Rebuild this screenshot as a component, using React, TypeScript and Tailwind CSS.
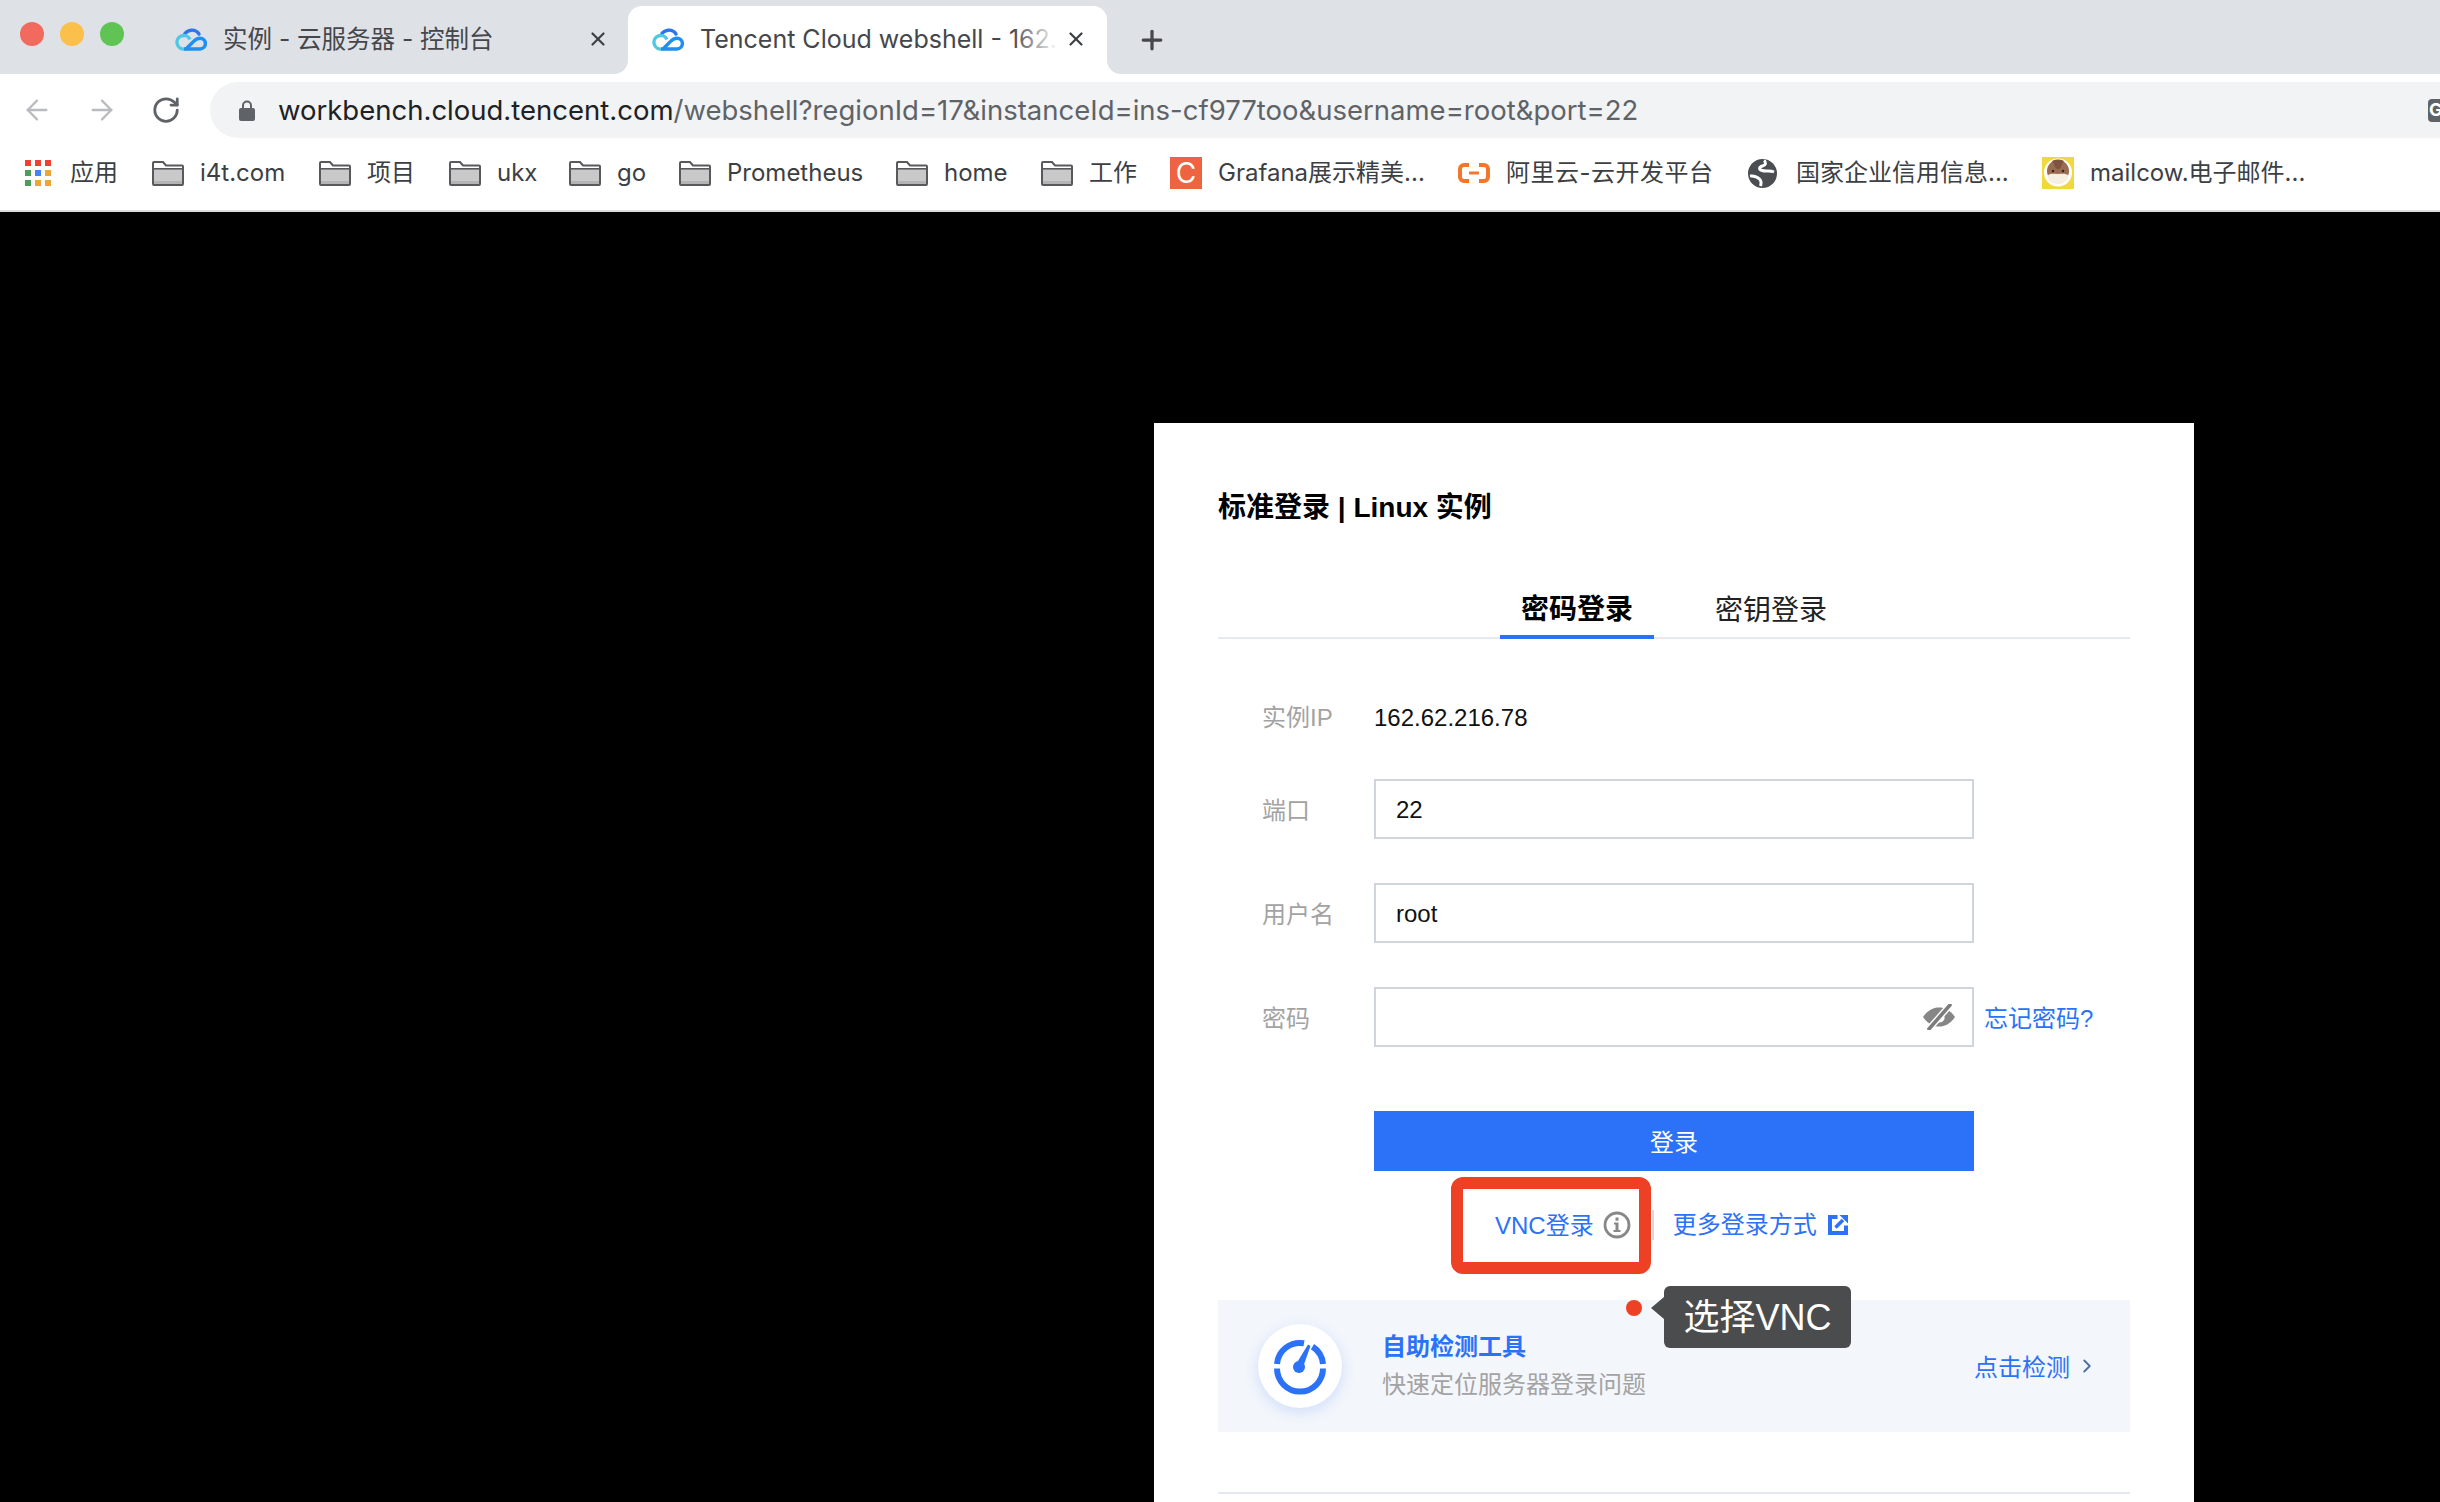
import React from 'react';
import { ArrowLeft, ArrowRight, RotateCw, ChevronRight, X, Plus } from 'lucide-react';

const chromeFont = "[font-family:'Inter','Noto_Sans_CJK_SC',sans-serif]";

function CloudLogo() {
  return (
    <svg width="32" height="24" viewBox="0 0 32 24" fill="none" strokeWidth="3.4" className="shrink-0">
      <path d="M9 8.5A8.5 8.5 0 0 1 24 7" stroke="#2b76f0" strokeLinecap="round" />
      <path d="M15 12.5A6.8 6.8 0 1 0 10 22" stroke="#4fc8e6" />
      <path d="M9 22H25A5.4 5.4 0 0 0 25 11.2C21 11.2 19 14 17 16L11.5 21.5" stroke="#1f8ff0" strokeLinejoin="round" />
    </svg>
  );
}

function Folder() {
  return (
    <svg width="32" height="25" viewBox="0 0 32 25" className="shrink-0">
      <path d="M2 1h9l3 3.5h16a1 1 0 0 1 1 1V23a1 1 0 0 1-1 1H2a1 1 0 0 1-1-1V2a1 1 0 0 1 1-1z" fill="#fff" stroke="#58595c" strokeWidth="2" />
      <rect x="2" y="8" width="28" height="15" fill="#c9c9c9" />
      <rect x="2" y="7" width="28" height="1.6" fill="#58595c" />
      <rect x="2" y="20" width="28" height="3" fill="#b4b4b4" />
    </svg>
  );
}

function AppsGrid() {
  const colors = ['bg-[#ea4335]', 'bg-[#ea4335]', 'bg-[#ea4335]', 'bg-[#4f9d5b]', 'bg-[#4285f4]', 'bg-[#eba635]', 'bg-[#4f9d5b]', 'bg-[#eba635]', 'bg-[#eba635]'];
  return (
    <div className="grid grid-cols-3 gap-[4px] w-[26px] shrink-0">
      {colors.map((c, i) => <div key={i} className={`h-[6px] w-[6px] ${c}`} />)}
    </div>
  );
}

function AliIcon() {
  return (
    <svg width="32" height="20" viewBox="0 0 32 20" fill="none" stroke="#f0782c" strokeWidth="4" className="shrink-0">
      <path d="M11 2H6a4 4 0 0 0-4 4v8a4 4 0 0 0 4 4h5" />
      <path d="M21 2h5a4 4 0 0 1 4 4v8a4 4 0 0 1-4 4h-5" />
      <path d="M11 10h10" strokeWidth="3" />
    </svg>
  );
}

function GlobeIcon() {
  return (
    <svg width="29" height="29" viewBox="0 0 29 29" className="shrink-0">
      <circle cx="14.5" cy="14.5" r="14.5" fill="#4a4d52" />
      <path d="M16 1.5c2.5 2 2 4.5-1.5 5.5-3.5 1-4 3.5-.5 4.5 4 1.2 8-.5 12 1.5" fill="none" stroke="#fff" strokeWidth="3" />
      <path d="M2 17c4-.5 7 .5 9.5 3 2 2 2 4 1 7" fill="none" stroke="#fff" strokeWidth="3" />
    </svg>
  );
}

function CowIcon() {
  return (
    <svg width="32" height="32" viewBox="0 0 32 32" className="shrink-0">
      <rect width="32" height="32" fill="#f0d93f" />
      <circle cx="16" cy="15.5" r="14" fill="#fff" />
      <circle cx="16" cy="14" r="11" fill="#9a6c52" />
      <path d="M5.500 19c2-3 6-2 10.500-2s8.500-1 10.500 2c-1 6-5.500 8-10.500 8s-9.500-2-10.500-8z" fill="#f6efe2" />
      <path d="M10 4c3 3 2 8 6 8s3-5 6-8a14 14 0 0 0-12 0z" fill="#7d5440" />
      <circle cx="11" cy="14" r="1.200" fill="#33231a" />
      <circle cx="21" cy="14" r="1.200" fill="#33231a" />
    </svg>
  );
}

const bookmarks = [
  { icon: <AppsGrid />, label: '应用', cls: 'ml-[19px] mr-[35px] w-[47px]' },
  { icon: <Folder />, label: 'i4t.com', cls: 'ml-[16px] mr-[34px] w-[85px]' },
  { icon: <Folder />, label: '项目', cls: 'ml-[16px] mr-[36px] w-[46px]' },
  { icon: <Folder />, label: 'ukx', cls: 'ml-[16px] mr-[32px] w-[40px]' },
  { icon: <Folder />, label: 'go', cls: 'ml-[16px] mr-[33px] w-[29px]' },
  { icon: <Folder />, label: 'Prometheus', cls: 'ml-[16px] mr-[33px] w-[136px]' },
  { icon: <Folder />, label: 'home', cls: 'ml-[16px] mr-[35px] w-[62px]' },
  { icon: <Folder />, label: '工作', cls: 'ml-[16px] mr-[34px] w-[47px]' },
  {
    icon: <div className="flex h-[32px] w-[32px] shrink-0 items-center justify-center bg-[#ee6341] text-[28px] leading-none text-white">C</div>,
    label: 'Grafana展示精美...', cls: 'ml-[16px] mr-[33px] w-[207px]',
  },
  { icon: <AliIcon />, label: '阿里云-云开发平台', cls: 'ml-[16px] mr-[35px] w-[207px] tracking-[0.5px]' },
  { icon: <GlobeIcon />, label: '国家企业信用信息...', cls: 'ml-[19px] mr-[34px] w-[212px]' },
  { icon: <CowIcon />, label: 'mailcow.电子邮件...', cls: 'ml-[16px] w-[216px]' },
];

function BrowserChrome() {
  return (
    <div className={`shrink-0 ${chromeFont}`}>
      <div className="flex h-[74px] items-end bg-[#dee1e6]">
        <div className="flex h-[68px] w-[175px] shrink-0 items-center gap-[16px] pb-[13px] pl-[20px]">
          <div className="h-[24px] w-[24px] rounded-full bg-[#f2695e]" />
          <div className="h-[24px] w-[24px] rounded-full bg-[#fbc04c]" />
          <div className="h-[24px] w-[24px] rounded-full bg-[#5fc454]" />
        </div>
        <div className="flex h-[68px] w-[453px] shrink-0 items-center pb-[2px] text-[#45474b]">
          <CloudLogo />
          <span className="ml-[16px] w-[364px] text-[24.5px] leading-none">实例 - 云服务器 - 控制台</span>
          <X size={22} strokeWidth={2.4} className="text-[#3c4043]" />
        </div>
        <div className="relative flex h-[68px] w-[479px] shrink-0 items-center rounded-t-[14px] bg-white pb-[2px] pl-[24px] text-[#45474b]">
          <div className="absolute -left-[14px] bottom-0 h-[14px] w-[14px] bg-white">
            <div className="h-full w-full rounded-br-[14px] bg-[#dee1e6]" />
          </div>
          <div className="absolute -right-[14px] bottom-0 h-[14px] w-[14px] bg-white">
            <div className="h-full w-full rounded-bl-[14px] bg-[#dee1e6]" />
          </div>
          <CloudLogo />
          <div className="relative ml-[16px] w-[358px] overflow-hidden whitespace-nowrap text-[25px] leading-none">
            Tencent Cloud webshell - 162.62.216.78
            <div className="absolute right-0 top-0 h-full w-[46px] bg-gradient-to-r from-transparent to-white" />
          </div>
          <X size={22} strokeWidth={2.4} className="ml-[7px] text-[#3c4043]" />
        </div>
        <Plus size={30} strokeWidth={2.6} className="mb-[19px] ml-[30px] text-[#45474b]" />
      </div>

      <div className="flex h-[64px] items-start bg-white pt-[8px]">
        <div className="flex h-[56px] w-[210px] shrink-0 items-center text-[#5f6368]">
          <ArrowLeft size={32} strokeWidth={1.7} className="ml-[21px] text-[#b9bbbe]" />
          <ArrowRight size={32} strokeWidth={1.7} className="ml-[33px] text-[#b9bbbe]" />
          <RotateCw size={30} strokeWidth={2.2} className="ml-[33px]" />
        </div>
        <div className="flex h-[56px] flex-1 items-center rounded-l-full bg-[#f1f3f4]">
          <svg width="16" height="21" viewBox="0 0 16 21" className="ml-[29px] shrink-0">
            <path d="M4 9V5.500a4 4 0 0 1 8 0V9" fill="none" stroke="#5f6368" strokeWidth="2" />
            <rect y="8" width="16" height="13" rx="2" fill="#5f6368" />
          </svg>
          <div className="ml-[23px] whitespace-nowrap pt-[2px] text-[27.5px] leading-none text-[#5f6368]">
            <span className="text-[#202124]">workbench.cloud.tencent.com</span>/webshell?regionId=17&instanceId=ins-cf977too&username=root&port=22
          </div>
          <div className="ml-auto flex h-[23px] w-[12px] items-center overflow-hidden rounded-l-[4px] bg-[#5f6368] pl-[1px] text-[18px] font-bold leading-none text-white">G</div>
        </div>
      </div>

      <div className="flex h-[74px] items-center border-b-2 border-[#dcdcdc] bg-white pb-[2px] pl-[25px] text-[24px] text-[#3c4043]">
        {bookmarks.map((b) => (
          <React.Fragment key={b.label}>
            {b.icon}
            <span className={`${b.cls} shrink-0 whitespace-nowrap leading-none`}>{b.label}</span>
          </React.Fragment>
        ))}
      </div>
    </div>
  );
}

function EyeOff() {
  return (
    <svg width="34" height="26" viewBox="0 0 34 26">
      <path d="M1 13C6 6 11 3.500 17 3.500S28 6 33 13c-5 7-10 9.500-16 9.500S6 20 1 13z" fill="#868686" />
      <path d="M19 10c3 0 4.500 3 3 6-1.500 2.500-4.500 3-7 2z" fill="#fff" />
      <path d="M7 25L28 1" stroke="#fff" strokeWidth="6.500" />
      <path d="M7 25L28 1" stroke="#7c7c7c" strokeWidth="3.600" strokeLinecap="round" />
    </svg>
  );
}

function InfoIcon() {
  return (
    <svg width="28" height="28" viewBox="0 0 28 28" className="shrink-0">
      <circle cx="14" cy="14" r="12" fill="none" stroke="#888" strokeWidth="2.800" />
      <rect x="12.500" y="6.500" width="3" height="3.200" fill="#888" />
      <path d="M11 11.500h4.500V19h2v2h-7v-2h2v-5.500H11z" fill="#888" />
    </svg>
  );
}

function ExternalIcon() {
  return (
    <svg width="20" height="20" viewBox="0 0 20 20" fill="none" stroke="#2b72f8" className="shrink-0">
      <path d="M9.500 2H2V18H18V10.500" strokeWidth="4" />
      <path d="M15 5L7.500 12.500" strokeWidth="3.600" />
      <path d="M11.500 0H20V8.500z" fill="#2b72f8" stroke="none" />
    </svg>
  );
}

function GaugeIcon() {
  return (
    <svg width="84" height="84" viewBox="0 0 84 84" fill="none" stroke="#2b72f8" strokeWidth="6">
      <path d="M19 40A23 23 0 0 1 46 19.300" />
      <path d="M54.500 22.600A23 23 0 0 1 65 40" />
      <path d="M19 44.500A23 23 0 0 0 65 44.500" />
      <circle cx="41" cy="43" r="6" fill="#2b72f8" stroke="none" />
      <path d="M37.500 41L50 20.500l2.500 1.500L44 46z" fill="#2b72f8" stroke="none" />
    </svg>
  );
}

const formRows = [
  { label: '端口', value: '22' },
  { label: '用户名', value: 'root' },
];

function LoginCard() {
  return (
    <div className="relative ml-[1154px] w-[1040px] flex-1 bg-white pl-[64px] pr-[64px] pt-[65px] [font-family:'Liberation_Sans','Noto_Sans_CJK_SC',sans-serif]">
      <h1 className="text-[28px] font-bold leading-[40px] text-black">标准登录 | Linux 实例</h1>

      <div className="mt-[43px] flex h-[68px] justify-center gap-[40px] border-b-2 border-[#e6eaf0]">
        <div className="-mb-[2px] flex h-[68px] items-center border-b-4 border-[#2b72f8] px-[21px] pt-[14px] text-[28px] font-bold text-black">密码登录</div>
        <div className="flex h-[66px] items-center px-[21px] pt-[14px] text-[28px] text-[#222]">密钥登录</div>
      </div>

      <div className="mt-[58px] flex h-[40px] items-center pl-[44px] pt-[2px] text-[24px]">
        <span className="w-[112px] text-[#a3a3a3]">实例IP</span>
        <span className="text-[#111]">162.62.216.78</span>
      </div>

      {formRows.map((row, i) => (
        <div key={row.label} className={`${i === 0 ? 'mt-[42px]' : 'mt-[44px]'} flex h-[60px] items-center pl-[44px] text-[24px]`}>
          <span className="w-[112px] pt-[3px] text-[#a3a3a3]">{row.label}</span>
          <div className="flex h-[60px] w-[600px] items-center border-2 border-[#d0d4dd] pl-[20px] pt-[2px] text-[#111]">{row.value}</div>
        </div>
      ))}

      <div className="mt-[44px] flex h-[60px] items-center pl-[44px] text-[24px]">
        <span className="w-[112px] pt-[3px] text-[#a3a3a3]">密码</span>
        <div className="flex h-[60px] w-[600px] items-center justify-end border-2 border-[#d0d4dd] pr-[16px]">
          <EyeOff />
        </div>
        <a className="ml-[10px] pt-[3px] text-[#2b72f8]">忘记密码?</a>
      </div>

      <div className="ml-[156px] mt-[64px] flex h-[60px] w-[600px] items-center justify-center bg-[#2b72f8] pt-[3px] text-[24px] text-white">登录</div>

      <div className="mt-[34px] flex h-[40px] items-center pl-[277px] text-[24px] text-[#2b72f8]">
        <span className="whitespace-nowrap pt-[2px]">VNC登录</span>
        <span className="ml-[9px]"><InfoIcon /></span>
        <span className="ml-[21px] h-[30px] w-[2px] shrink-0 bg-[#d8dbe1]" />
        <span className="ml-[19px]">更多登录方式</span>
        <span className="ml-[11px]"><ExternalIcon /></span>
      </div>

      <div className="mt-[55px] flex h-[132px] items-center bg-[#f3f6fb] pl-[40px] pr-[32px]">
        <div className="flex h-[84px] w-[84px] shrink-0 items-center justify-center rounded-full bg-white shadow-[0_4px_14px_rgba(43,114,248,0.18)]">
          <GaugeIcon />
        </div>
        <div className="ml-[40px] flex flex-col">
          <span className="text-[24px] font-bold leading-[36px] text-[#2b72f8]">自助检测工具</span>
          <span className="mt-[2px] text-[24px] leading-[36px] text-[#a3a3a3]">快速定位服务器登录问题</span>
        </div>
        <span className="ml-auto pt-[3px] text-[24px] text-[#2b72f8]">点击检测</span>
        <ChevronRight size={22} strokeWidth={2} className="ml-[6px] text-[#4a6ea8]" />
      </div>

      <div className="mt-[60px] h-[2px] bg-[#e6eaf0]" />

      {/* annotations pasted over the screenshot */}
      <div className="absolute left-[297px] top-[754px] h-[97px] w-[200px] rounded-[12px] border-[12px] border-[#ee4025]" />
      <div className="absolute left-[472px] top-[877px] h-[16px] w-[16px] rounded-full bg-[#ee4025]" />
      <div className="absolute left-[510px] top-[863px] flex h-[62px] w-[187px] items-center justify-center rounded-[6px] bg-[#4b4c4e] pt-[2px] text-[36px] text-white">
        <div className="absolute -left-[13px] top-[11px] h-0 w-0 border-y-[11px] border-r-[13px] border-y-transparent border-r-[#4b4c4e]" />
        选择VNC
      </div>
    </div>
  );
}

export default function App() {
  return (
    <div className="flex h-[1502px] w-[2440px] flex-col overflow-hidden bg-black">
      <BrowserChrome />
      <div className="h-[211px] shrink-0" />
      <LoginCard />
    </div>
  );
}
